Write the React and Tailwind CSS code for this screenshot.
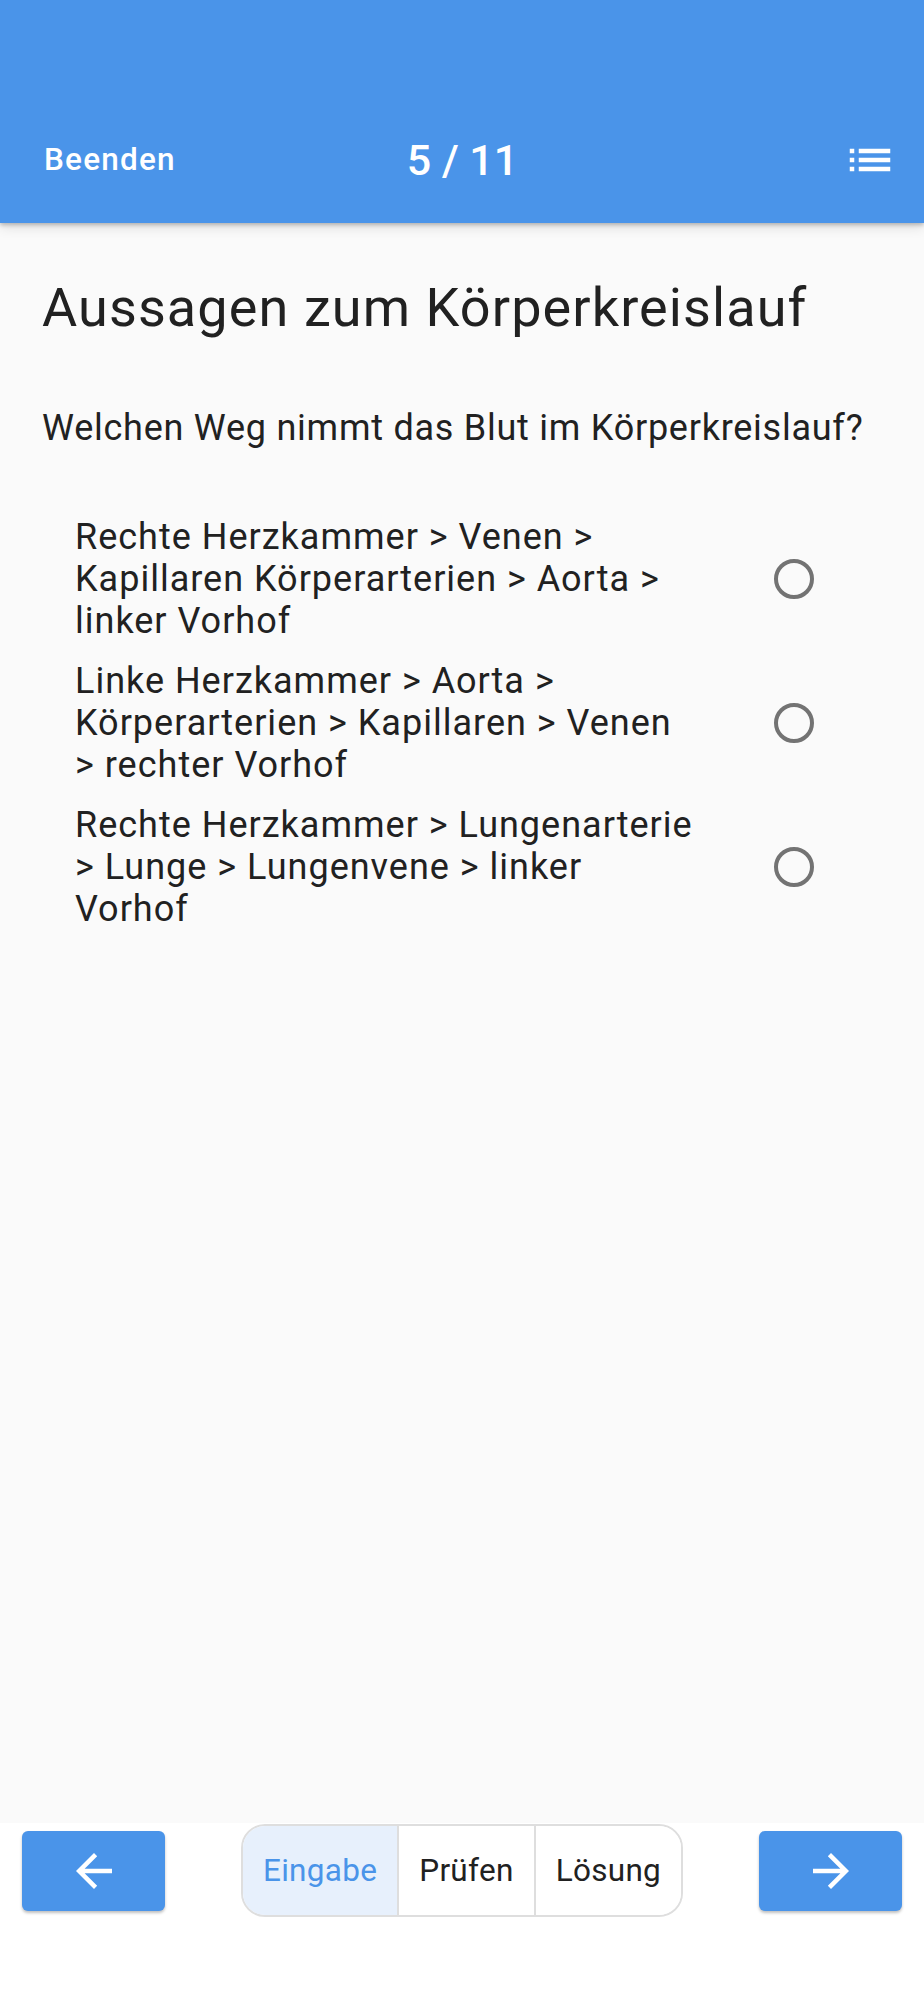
import React from 'react';

const options = [
  ['Rechte Herzkammer > Venen >', 'Kapillaren Körperarterien > Aorta >', 'linker Vorhof'],
  ['Linke Herzkammer > Aorta >', 'Körperarterien > Kapillaren > Venen', '> rechter Vorhof'],
  ['Rechte Herzkammer > Lungenarterie', '> Lunge > Lungenvene > linker', 'Vorhof'],
];

const ListIcon = () => (
  <svg width="54" height="54" viewBox="0 0 24 24" fill="#ffffff">
    <path d="M3 13h2v-2H3v2zm0 4h2v-2H3v2zm0-8h2V7H3v2zm4 4h14v-2H7v2zm0 4h14v-2H7v2zM7 7v2h14V7H7z" />
  </svg>
);

const ArrowBack = () => (
  <svg width="54" height="54" viewBox="0 0 24 24" fill="#ffffff">
    <path d="M20 11H7.83l5.59-5.59L12 4l-8 8 8 8 1.41-1.41L7.83 13H20v-2z" />
  </svg>
);

const ArrowForward = () => (
  <svg width="54" height="54" viewBox="0 0 24 24" fill="#ffffff">
    <path d="M12 4l-1.41 1.41L16.17 11H4v2h12.17l-5.58 5.59L12 20l8-8z" />
  </svg>
);

function App() {
  return (
    <div className="h-[2000px] flex flex-col bg-white font-[Roboto,sans-serif] text-[#212121]">
      {/* App bar */}
      <header className="relative z-10 h-[223px] shrink-0 bg-[#4a94e9] flex flex-col justify-end shadow-[0_2px_4px_rgba(0,0,0,0.22),0_4px_12px_rgba(0,0,0,0.12)]">
        <div className="h-[126px] flex items-center text-white">
          <div className="flex-1 pl-[44px] text-[31.5px] font-medium tracking-[1.2px]">Beenden</div>
          <div className="mr-[16px] text-[43px] font-medium">5 / 11</div>
          <div className="flex-1 flex justify-end pr-[27px]">
            <ListIcon />
          </div>
        </div>
      </header>

      {/* Content */}
      <main className="flex-1 bg-[#fafafa] px-[42px]">
        <h1 className="mt-[53px] text-[54px] leading-[63px] font-normal tracking-[1.1px]">Aussagen zum Körperkreislauf</h1>
        <p className="mt-[68px] text-[36px] leading-[42px] tracking-[0.75px]">Welchen Weg nimmt das Blut im Körperkreislauf?</p>

        <div className="mt-[67px] flex flex-col gap-[18px]">
          {options.map((lines, i) => (
            <div key={i} className="flex items-center">
              <div className="w-[663px] pl-[33px] text-[36px] leading-[42px] tracking-[1px]">
                {lines.map((l, j) => (
                  <div key={j} className="whitespace-nowrap">{l}</div>
                ))}
              </div>
              <div className="flex-1 flex justify-center">
                <div className="w-[40px] h-[40px] rounded-full border-[4.5px] border-[#737373]" />
              </div>
            </div>
          ))}
        </div>
      </main>

      {/* Bottom bar */}
      <div className="h-[100px] shrink-0 bg-white flex items-center justify-between px-[22px] pb-[5px]">
        <button className="w-[143px] h-[80px] rounded-[6px] bg-[#4a94e9] flex items-center justify-center shadow-[0_2px_3px_rgba(0,0,0,0.25)]">
          <ArrowBack />
        </button>

        <div className="flex h-[93px] rounded-[24px] border-2 border-[#dedede] overflow-hidden text-[31.5px] tracking-[0.3px]">
          <div className="px-[20px] flex items-center bg-[#e7f0fc] text-[#4a94e9]">Eingabe</div>
          <div className="px-[20px] flex items-center border-l-2 border-[#dedede] bg-white">Prüfen</div>
          <div className="px-[20px] flex items-center border-l-2 border-[#dedede] bg-white">Lösung</div>
        </div>

        <button className="w-[143px] h-[80px] rounded-[6px] bg-[#4a94e9] flex items-center justify-center shadow-[0_2px_3px_rgba(0,0,0,0.25)]">
          <ArrowForward />
        </button>
      </div>

      <div className="h-[77px] shrink-0 bg-white" />
    </div>
  );
}

export default App;
